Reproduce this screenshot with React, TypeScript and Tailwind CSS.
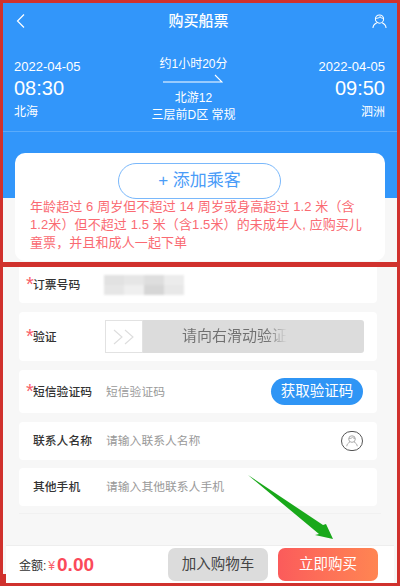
import React from 'react';

const cjk = "font-['Liberation_Sans','Noto_Sans_CJK_SC',sans-serif]";

const UserIcon = ({ className }: { className: string }) => (
  <svg viewBox="0 0 16 16" fill="none" stroke="currentColor" strokeWidth={1.1} className={className}>
    <circle cx="8" cy="5.4" r="4.4" />
    <path d="M3.8 4.4c1.8.5 3.6 0 4.8-1.5.9 1.2 2.2 1.7 3.6 1.5" />
    <path d="M1 15c.2-2.6 2-4.6 4.2-5.6M15 15c-.2-2.6-2-4.6-4.2-5.6" />
  </svg>
);

const Label = ({ text, required }: { text: string; required?: boolean }) => (
  <div className="relative w-[73px] shrink-0 pt-[2px] text-[11.8px] font-medium text-[#333]">
    {required && <span className="absolute left-[-7px] top-[-1px] text-[20px] leading-[20px] font-normal text-[#f9606a]">*</span>}
    {text}
  </div>
);

const Side = ({ time, place, right }: { time: string; place: string; right?: boolean }) => (
  <div className={right ? 'text-right' : ''}>
    <div className="text-[13px] leading-[16px] pt-[1px]">2022-04-05</div>
    <div className="text-[20px] leading-[27px]">{time}</div>
    <div className="text-[12px] leading-[20px]">{place}</div>
  </div>
);

export default function App() {
  return (
    <div className={`relative w-[400px] h-[586px] flex flex-col overflow-hidden bg-[#d0312d] ${cjk}`}>
      <div className="h-[259px] shrink-0 mx-[3px] mt-[3px] bg-[#f7f7f7] overflow-hidden">
        <div className="h-[195px] bg-[#3296fa] text-white">
          <div className="relative flex items-center justify-between h-[36px] pl-[12px] pr-[10px]">
            <svg viewBox="0 0 10 14" fill="none" stroke="currentColor" strokeWidth={1.2} className="w-[10px] h-[14px]">
              <path d="M9 .5 2.5 7 9 13.5" />
            </svg>
            <div className="text-[15px] font-medium">购买船票</div>
            <UserIcon className="w-[15px] h-[15px]" />
          </div>

          <div className="flex justify-between h-[93px] pl-[11px] pr-[12px] pt-[19px] border-b border-[#5aabfb]">
            <Side time="08:30" place="北海" />
            <div className="flex flex-col items-center mr-[12px] -mt-[2px] text-[12px] leading-[17px]">
              <div>约1小时20分</div>
              <svg viewBox="0 0 60 9" fill="none" stroke="currentColor" strokeWidth={1.1} className="w-[60px] h-[9px] mt-[1px] mb-[7px]">
                <path d="M0 8h59L52 1" />
              </svg>
              <div>北游12</div>
              <div>三层前D区 常规</div>
            </div>
            <Side time="09:50" place="泗洲" right />
          </div>
        </div>

        <div className="mx-[12px] -mt-[45px] h-[108px] rounded-[10px] bg-white pt-[10px] pl-[15px]">
          <div className="ml-[88px] flex h-[36px] w-[163px] items-center justify-center rounded-full border border-[#7ab8fb] text-[17px] text-[#4a9cf8]">
            + 添加乘客
          </div>
          <div className="mt-[-1px] text-[13px] leading-[18px] tracking-[0.1px] whitespace-nowrap text-[#fa6a72]">
            <div>年龄超过 6 周岁但不超过 14 周岁或身高超过 1.2 米（含</div>
            <div>1.2米）但不超过 1.5 米（含1.5米）的未成年人, 应购买儿</div>
            <div>童票，并且和成人一起下单</div>
          </div>
        </div>
      </div>

      <div className="h-[5px] shrink-0" />

      <div className="flex-1 min-h-0 mx-[3px] mb-[3px] bg-[#f7f7f7] flex flex-col">
        <div className="flex flex-col gap-[9px] pl-[16px] pr-[20px]">
          <div className="flex items-center h-[36px] bg-white rounded-b-[4px] pl-[14px]">
            <Label text="订票号码" required />
            <div className="grid grid-cols-4 w-[80px] h-[20px] -ml-[2px] blur-[1px]">
              <div className="bg-[#e2e2e2]" />
              <div className="bg-[#e6e6e6]" />
              <div className="bg-[#dedede]" />
              <div className="bg-[#ececec]" />
              <div className="bg-[#e6e6e6]" />
              <div className="bg-[#efefef]" />
              <div className="bg-[#d6d6d6]" />
              <div className="bg-[#e8e8e8]" />
            </div>
          </div>
          <div className="flex items-center h-[49px] bg-white rounded-[4px] pl-[14px] pr-[13px]">
            <Label text="验证" required />
            <div className="relative flex flex-1 items-center justify-center h-[33px] -ml-[1px] rounded-[3px] bg-[#dcdcdc]">
              <div className="bg-gradient-to-r from-[#707070] via-[#707070] via-80% to-[#dcdcdc] bg-clip-text text-[15px] text-transparent">
                请向右滑动验证
              </div>
              <div className="absolute inset-y-0 left-0 flex items-center justify-center w-[38px] bg-white border border-[#e2e2e2] text-[#ddd]">
                <svg viewBox="0 0 22 16" fill="none" stroke="currentColor" strokeWidth={1.1} className="w-[22px] h-[16px]">
                  <path d="M1 1l8 7-8 7M12 1l8 7-8 7" />
                </svg>
              </div>
            </div>
          </div>
          <div className="flex items-center h-[43px] bg-white rounded-[4px] pl-[14px] pr-[14px]">
            <Label text="短信验证码" required />
            <div className="flex-1 pt-[2px] text-[11.8px] text-[#999]">短信验证码</div>
            <div className="flex items-center justify-center w-[92px] h-[27px] rounded-full bg-[#2f95f5] text-[14.5px] text-white">获取验证码</div>
          </div>
          <div className="flex items-center h-[38px] bg-white rounded-[4px] pl-[14px] pr-[14px]">
            <Label text="联系人名称" />
            <div className="flex-1 pt-[2px] text-[11.8px] text-[#999]">请输入联系人名称</div>
            <div className="flex items-center justify-center w-[22px] h-[20px] rounded-full border border-[#555] text-[#999]">
              <UserIcon className="w-[12px] h-[12px]" />
            </div>
          </div>
          <div className="flex items-center h-[38px] -mt-[1px] bg-white rounded-[4px] pl-[14px]">
            <Label text="其他手机" />
            <div className="flex-1 pt-[2px] text-[11.8px] text-[#999]">请输入其他联系人手机</div>
          </div>
        </div>
        <div className="flex-1 mt-[7px] mx-[16px] border-t border-[#f1f1f1]" />
        <div className="flex items-center h-[38px] mx-[3px] bg-white border-t border-[#eee] pl-[13px] pr-[16px]">
          <span className="mt-[3px] text-[12px] text-[#333]">金额:</span>
          <span className="mt-[3px] ml-[2px] text-[12px] text-[#f9606a]">¥</span>
          <span className="mt-[1px] ml-[2px] text-[19px] font-bold text-[#fb4a5a]">0.00</span>
          <div className="flex-1" />
          <div className="flex items-center justify-center w-[100px] h-[33px] rounded-[7px] bg-[#dcdcdc] text-[14.5px] text-[#444]">加入购物车</div>
          <div className="flex items-center justify-center w-[100px] h-[33px] ml-[10px] rounded-[7px] bg-gradient-to-r from-[#fb5b5b] to-[#ff8552] text-[14.5px] text-white">立即购买</div>
        </div>
      </div>

      <div className="absolute left-[3px] top-[574px] w-[3px] h-[9px] bg-[#d0312d]" />

      <svg viewBox="0 0 90 70" className="absolute left-[247px] top-[474px] z-20 w-[90px] h-[70px]">
        <path d="M1 1 76 51 79 50 86 65 68 61 72 60z" fill="#19a81a" />
      </svg>
    </div>
  );
}
